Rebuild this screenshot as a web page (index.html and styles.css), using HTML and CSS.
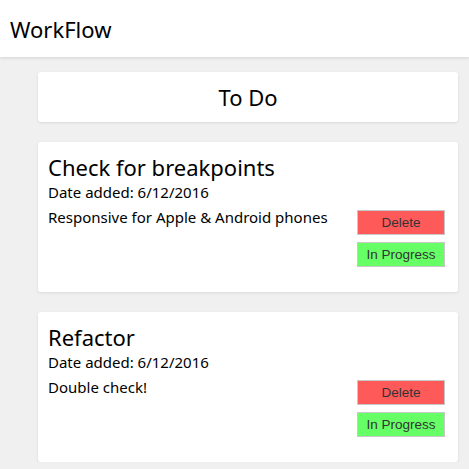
FILE: index.html
```html
<!DOCTYPE html>
<html>
<head>
<meta charset="utf-8">
<link rel="stylesheet" href="styles.css">
</head>
<body>
<header class="topbar"><span class="brand">WorkFlow</span></header>
<main class="board">
  <div class="column-head">To Do</div>
  <div class="card">
    <div class="card-title">Check for breakpoints</div>
    <div class="card-date">Date added: 6/12/2016</div>
    <div class="card-row">
      <div class="card-desc">Responsive for Apple &amp; Android phones</div>
      <div class="actions">
        <button class="btn btn-delete">Delete</button>
        <button class="btn btn-progress">In Progress</button>
      </div>
    </div>
  </div>
  <div class="card">
    <div class="card-title">Refactor</div>
    <div class="card-date">Date added: 6/12/2016</div>
    <div class="card-row">
      <div class="card-desc">Double check!</div>
      <div class="actions">
        <button class="btn btn-delete">Delete</button>
        <button class="btn btn-progress">In Progress</button>
      </div>
    </div>
  </div>
</main>
</body>
</html>
```

FILE: styles.css
```css
html, body {
  margin: 0;
  padding: 0;
  background: #f0f0f0;
  font-family: "Noto Sans", "Open Sans", sans-serif;
  color: #000;
}
.topbar {
  height: 57px;
  background: #fff;
  box-shadow: 0 1px 3px rgba(0,0,0,0.12);
  display: flex;
  align-items: center;
  padding-left: 10px;
  box-sizing: border-box;
}
.brand {
  font-size: 22px;
}
.board {
  width: 420px;
  margin-left: 38px;
  padding-top: 15px;
  display: flex;
  flex-direction: column;
  gap: 20px;
}
.column-head {
  height: 50px;
  background: #fff;
  border-radius: 3px;
  box-shadow: 0 1px 3px rgba(0,0,0,0.1);
  display: flex;
  align-items: center;
  justify-content: center;
  font-size: 22px;
}
.card {
  height: 150px;
  box-sizing: border-box;
  background: #fff;
  border-radius: 3px;
  box-shadow: 0 1px 3px rgba(0,0,0,0.1);
  padding: 10px 13px 0 10px;
}
.card-title {
  font-size: 22px;
  line-height: 30px;
}
.card-date {
  font-size: 15px;
  line-height: 20px;
}
.card-row {
  display: flex;
  justify-content: space-between;
  align-items: flex-start;
  margin-top: 5px;
}
.card-desc {
  font-size: 15px;
  line-height: 20px;
}
.actions {
  display: flex;
  flex-direction: column;
  gap: 7px;
  margin-top: 3px;
}
.btn {
  width: 88px;
  height: 25px;
  box-sizing: border-box;
  border: 1px solid #c8c8c8;
  font-family: "Liberation Sans", Arial, sans-serif;
  font-size: 13.5px;
  color: #333;
  padding: 0;
  margin: 0;
}
.btn-delete { background: #ff5a5a; }
.btn-progress { background: #66ff66; }
```
